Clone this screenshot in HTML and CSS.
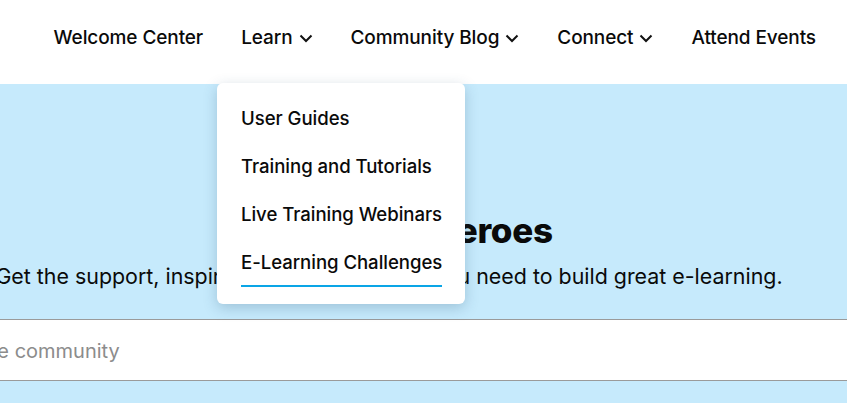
FILE: index.html
```html
<!DOCTYPE html>
<html lang="en">
<head>
<meta charset="utf-8">
<title>E-Learning Heroes</title>
<link rel="stylesheet" href="styles.css">
</head>
<body>
<header class="header">
  <nav class="nav">
    <a class="nav-item" href="#">Welcome Center</a>
    <a class="nav-item" href="#">Learn <svg class="chev" viewBox="0 0 14 9" width="14" height="9"><path d="M1.5 1.5 L7 7 L12.5 1.5" fill="none" stroke="#111" stroke-width="2"/></svg></a>
    <a class="nav-item" href="#">Community Blog <svg class="chev" viewBox="0 0 14 9" width="14" height="9"><path d="M1.5 1.5 L7 7 L12.5 1.5" fill="none" stroke="#111" stroke-width="2"/></svg></a>
    <a class="nav-item" href="#">Connect <svg class="chev" viewBox="0 0 14 9" width="14" height="9"><path d="M1.5 1.5 L7 7 L12.5 1.5" fill="none" stroke="#111" stroke-width="2"/></svg></a>
    <a class="nav-item" href="#">Attend Events</a>
  </nav>
</header>
<main class="hero">
  <div class="hero-inner">
    <h1 class="hero-title">E-Learning Heroes</h1>
    <p class="hero-sub">Get the support, inspiration, and resources you need to build great e-learning.</p>
  </div>
  <div class="search">
    <input class="search-input" type="text" placeholder="Search the community">
  </div>
</main>
<div class="dropdown">
  <a class="dd-item" href="#">User Guides</a>
  <a class="dd-item" href="#">Training and Tutorials</a>
  <a class="dd-item" href="#">Live Training Webinars</a>
  <a class="dd-item active" href="#"><span>E-Learning Challenges</span></a>
</div>
</body>
</html>
```
FILE: styles.css
```css
html, body {
  margin: 0;
  padding: 0;
  overflow: hidden;
  background: #c6eafc;
}
body {
  font-family: Inter, "Noto Sans", sans-serif;
  color: #0a0a0a;
  width: 847px;
  height: 403px;
  position: relative;
}
a { color: inherit; text-decoration: none; }

.header {
  background: #fff;
  height: 84px;
  display: flex;
  justify-content: flex-end;
  align-items: center;
}
.nav {
  display: flex;
  align-items: center;
  gap: 38px;
  padding-right: 31px;
  padding-bottom: 10px;
}
.nav-item {
  font-size: 19px;
  font-weight: 500;
  letter-spacing: -0.1px;
  display: flex;
  align-items: center;
  gap: 6px;
  white-space: nowrap;
}
.chev { display: block; margin-top: 2px; }

.hero {
  background: #c6eafc;
  height: 319px;
  display: flex;
  flex-direction: column;
}
.hero-inner {
  width: 1000px;
  margin-left: -111px;
  text-align: center;
  padding-top: 126px;
}
.hero-title {
  margin: 0;
  padding-left: 10px;
  font-size: 35px;
  line-height: 40px;
  font-weight: 800;
  letter-spacing: -0.3px;
}
.hero-sub {
  margin: 12px 0 0;
  font-size: 21.4px;
  line-height: 28px;
  font-weight: 400;
}
.search {
  margin-top: 29px;
  margin-left: -113px;
  width: 1100px;
}
.search-input {
  box-sizing: border-box;
  width: 100%;
  height: 62px;
  border: 0;
  border-top: 1px solid #9a9a9a;
  border-bottom: 1px solid #9a9a9a;
  background: #fff;
  padding: 2px 20px 0;
  font-family: inherit;
  font-size: 20px;
  outline: none;
}
.search-input::placeholder { color: #8c8c8c; }

.dropdown {
  position: absolute;
  left: 217px;
  top: 83px;
  width: 248px;
  height: 221px;
  box-sizing: border-box;
  background: #fff;
  border-radius: 6px;
  box-shadow: 0 4px 14px rgba(40, 80, 110, 0.25);
  padding: 11px 24px 18px;
  display: flex;
  flex-direction: column;
}
.dd-item {
  height: 48px;
  display: flex;
  align-items: center;
  font-size: 18.6px;
  font-weight: 500;
  letter-spacing: -0.05px;
  white-space: nowrap;
}
.dd-item.active span {
  display: inline-block;
  line-height: 46px;
  border-bottom: 2px solid #0aa5e6;
  margin-top: 2px;
}
```
